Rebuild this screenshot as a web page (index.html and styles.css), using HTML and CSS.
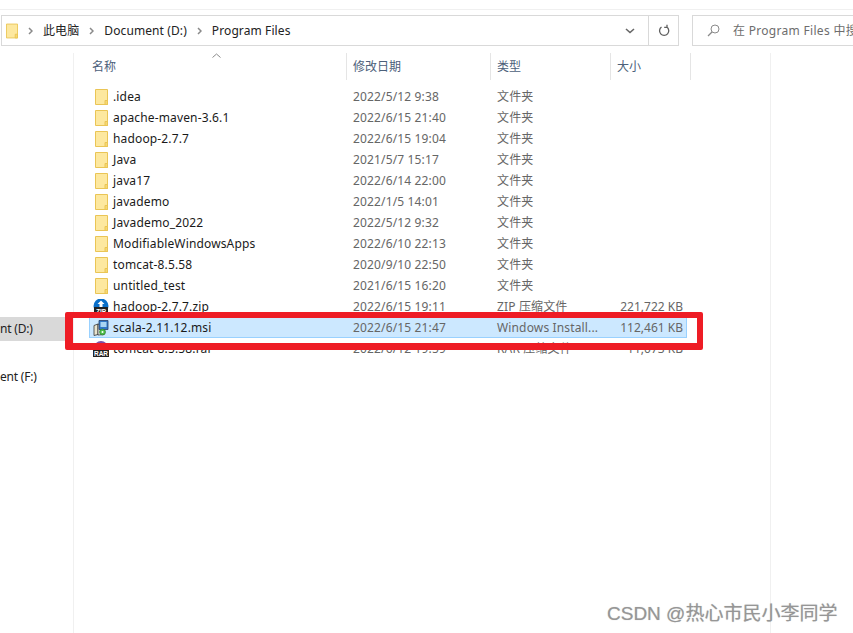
FILE: index.html
```html
<!DOCTYPE html>
<html lang="zh">
<head>
<meta charset="utf-8">
<title>Program Files</title>
<link rel="stylesheet" href="styles.css">
</head>
<body>
<svg class="sprites" width="0" height="0" aria-hidden="true">
  <defs>
    <symbol id="folder" viewBox="0 0 13 16">
      <path d="M.5.5h12v15H.5z" fill="#fde89f" stroke="#eac555"/>
      <path d="M10 15.500v-4h2.500v4z" fill="#f6d873" stroke="#eac555"/>
    </symbol>
    <symbol id="chev" viewBox="0 0 5 8">
      <path d="M1 1l3 3-3 3" fill="none" stroke="#8a8a8a" stroke-width="1.500"/>
    </symbol>
  </defs>
</svg>
<div class="topline"></div>
<header class="toolbar">
  <nav class="address">
    <svg class="crumb-folder"><use href="#folder"/></svg>
    <span class="sep"><svg class="chev"><use href="#chev"/></svg></span><span class="crumb">此电脑</span>
    <span class="sep"><svg class="chev"><use href="#chev"/></svg></span><span class="crumb">Document (D:)</span>
    <span class="sep"><svg class="chev"><use href="#chev"/></svg></span><span class="crumb">Program Files</span>
    <svg class="dropdown" width="10" height="6" viewBox="0 0 10 6"><path d="M1 1l4 3.500L9 1" fill="none" stroke="#666" stroke-width="1.600"/></svg>
  </nav>
  <div class="refresh">
    <svg width="12" height="13" viewBox="0 0 12 13"><path d="M3.200 3A4.600 4.600 0 1 0 8.500 3M3 .8V3.400h2.800" transform="matrix(-1 0 0 1 12 0)" fill="none" stroke="#5f5f5f" stroke-width="1.300"/></svg>
  </div>
  <div class="search">
    <svg class="search-ico" width="13" height="13" viewBox="0 0 13 13"><circle cx="8" cy="5" r="4" fill="none" stroke="#8a8a8a"/><path d="M5 8L1 12" stroke="#8a8a8a" stroke-width="1.200"/></svg>
    <span class="search-text">在 Program Files 中搜索</span>
  </div>
</header>
<main class="main">
  <aside class="sidebar">
    <div class="side-item active">nt (D:)</div>
    <div class="side-item side-last">ent (F:)</div>
  </aside>
  <section class="content">
    <div class="columns">
      <div class="col col-name">名称</div>
      <div class="col">修改日期</div>
      <div class="col">类型</div>
      <div class="col">大小</div>
    </div>
    <svg class="sort" width="9" height="5" viewBox="0 0 9 5"><path d="M.5 4.500l4-3.500 4 3.500" fill="none" stroke="#8a8a8a"/></svg>
    <div class="rows">
      <div class="row"><div class="name"><svg class="ico"><use href="#folder"/></svg>.idea</div><div class="meta">2022/5/12 9:38</div><div class="meta">文件夹</div><div></div></div>
      <div class="row"><div class="name"><svg class="ico"><use href="#folder"/></svg>apache-maven-3.6.1</div><div class="meta">2022/6/15 21:40</div><div class="meta">文件夹</div><div></div></div>
      <div class="row"><div class="name"><svg class="ico"><use href="#folder"/></svg>hadoop-2.7.7</div><div class="meta">2022/6/15 19:04</div><div class="meta">文件夹</div><div></div></div>
      <div class="row"><div class="name"><svg class="ico"><use href="#folder"/></svg>Java</div><div class="meta">2021/5/7 15:17</div><div class="meta">文件夹</div><div></div></div>
      <div class="row"><div class="name"><svg class="ico"><use href="#folder"/></svg>java17</div><div class="meta">2022/6/14 22:00</div><div class="meta">文件夹</div><div></div></div>
      <div class="row"><div class="name"><svg class="ico"><use href="#folder"/></svg>javademo</div><div class="meta">2022/1/5 14:01</div><div class="meta">文件夹</div><div></div></div>
      <div class="row"><div class="name"><svg class="ico"><use href="#folder"/></svg>Javademo_2022</div><div class="meta">2022/5/12 9:32</div><div class="meta">文件夹</div><div></div></div>
      <div class="row"><div class="name"><svg class="ico"><use href="#folder"/></svg>ModifiableWindowsApps</div><div class="meta">2022/6/10 22:13</div><div class="meta">文件夹</div><div></div></div>
      <div class="row"><div class="name"><svg class="ico"><use href="#folder"/></svg>tomcat-8.5.58</div><div class="meta">2020/9/10 22:50</div><div class="meta">文件夹</div><div></div></div>
      <div class="row"><div class="name"><svg class="ico"><use href="#folder"/></svg>untitled_test</div><div class="meta">2021/6/15 16:20</div><div class="meta">文件夹</div><div></div></div>
      <div class="row">
        <div class="name">
          <svg class="ico-file" viewBox="0 0 16 16"><circle cx="8" cy="7" r="7.500" fill="#0a6fc9"/><path d="M8 1.500l3.500 3.500H9.500v3h-3V5H4.500z" fill="#fff"/><path d="M1 8h14v8H1z" fill="#222"/><text class="badge" x="8" y="14.500">ZIP</text></svg>hadoop-2.7.7.zip
        </div>
        <div class="meta">2022/6/15 19:11</div><div class="meta">ZIP 压缩文件</div><div class="meta size">221,722 KB</div>
      </div>
      <div class="row selected">
        <div class="name">
          <svg class="ico-file" viewBox="0 0 16 16"><path d="M1 5.500l4-1.500v10.500l-4 1z" fill="#e9e4cf" stroke="#333" stroke-width=".8"/><path d="M5 4l6 1.500v9l-6 .500z" fill="#fff" stroke="#333" stroke-width=".8"/><path d="M6 .500h9v9H6z" fill="#2f78c8" stroke="#2a3f66" stroke-width=".8"/><path d="M7.500 2h6v5h-6z" fill="#a8d4f2"/><circle cx="9.500" cy="12" r="3" fill="#4cc04a" stroke="#2c6b2a" stroke-width=".6"/><circle cx="9.500" cy="12" r="1" fill="#fff"/></svg>scala-2.11.12.msi
        </div>
        <div class="meta">2022/6/15 21:47</div><div class="meta">Windows Install...</div><div class="meta size">112,461 KB</div>
      </div>
      <div class="row">
        <div class="name">
          <svg class="ico-file" viewBox="0 0 16 16"><circle cx="8" cy="7" r="7" fill="#7a4fa8"/><circle cx="8" cy="5" r="2.500" fill="#c24a78"/><path d="M0 9h16v7H0z" fill="#222"/><text class="badge" x="8" y="15.200">RAR</text></svg>tomcat-8.5.58.rar
        </div>
        <div class="meta">2022/6/12 19:59</div><div class="meta">RAR 压缩文件</div><div class="meta size">11,073 KB</div>
      </div>
    </div>
  </section>
</main>
<div class="highlight"></div>
<div class="watermark">CSDN @热心市民小李同学</div>
</body>
</html>
```
FILE: styles.css
```css
* { box-sizing: border-box; }
html, body { margin: 0; height: 100%; }
body {
  position: relative;
  width: 853px;
  height: 633px;
  overflow: hidden;
  background: #fff;
  color: #1a1a1a;
  font: 12px/21px "Noto Sans", "Noto Sans CJK SC", sans-serif;
}
.sprites { position: absolute; }
.topline { height: 1px; margin-top: 9px; background: #f0f0f0; }

.toolbar { display: flex; height: 31px; margin-top: 5px; padding-left: 1px; }
.address {
  display: flex;
  flex: none;
  align-items: center;
  width: 647px;
  padding-left: 4px;
  border: 1px solid #d9d9d9;
  border-right: 0;
  letter-spacing: .1px;
}
.crumb-folder { width: 12px; height: 16px; }
.sep { display: flex; justify-content: center; width: 25px; }
.chev { width: 5px; height: 8px; }
.crumb { color: #222; }
.dropdown { margin-left: auto; margin-right: 13px; }
.refresh {
  display: flex;
  flex: none;
  align-items: center;
  justify-content: center;
  width: 31px;
  border: 1px solid #d9d9d9;
}
.search {
  display: flex;
  flex: none;
  align-items: center;
  gap: 13px;
  width: 161px;
  margin-left: 13px;
  padding-left: 14px;
  border: 1px solid #d9d9d9;
  border-right: 0;
  color: #6d6d6d;
  white-space: nowrap;
  overflow: hidden;
}
.search-ico { flex: none; }
.search-text { letter-spacing: .3px; }

.main { display: flex; height: 580px; margin-top: 7px; }
.sidebar {
  flex: none;
  width: 74px;
  padding-top: 264px;
  border-right: 1px solid #f0f0f0;
}
.side-item { height: 24px; line-height: 24px; color: #222; letter-spacing: -.2px; }
.side-item.active { background: #d9d9d9; }
.side-last { margin-top: 24px; }

.content { position: relative; flex: none; width: 697px; border-right: 1px solid #f0f0f0; }
.columns { display: grid; grid-template-columns: 273px 144px 120px 80px; height: 27px; }
.col {
  padding-left: 6px;
  border-right: 1px solid #e5e5e5;
  color: #4c607a;
  line-height: 27px;
}
.col-name { padding-left: 18px; }
.sort { position: absolute; left: 138px; top: 0; }

.rows { margin: 6px 0 0 15px; width: 598px; letter-spacing: .15px; }
.row {
  display: grid;
  grid-template-columns: 263px 144px 103px 83px;
  height: 21px;
  border: 1px solid transparent;
  line-height: 19px;
  white-space: nowrap;
}
.row.selected { background: #cce8ff; border-color: #99d1ff; }
.name { display: flex; align-items: center; padding-left: 5px; }
.ico { width: 13px; height: 16px; margin-right: 5px; flex: none; }
.ico-file { width: 16px; height: 16px; margin: 0 4px 0 -2px; flex: none; }
.badge {
  fill: #fff;
  font: 700 6.500px "Liberation Sans", sans-serif;
  text-anchor: middle;
  letter-spacing: 0;
}
.meta { color: #666; }
.size { text-align: right; letter-spacing: 0; }

.highlight {
  position: absolute;
  left: 65px;
  top: 312px;
  width: 638px;
  height: 38px;
  border-style: solid;
  border-color: #ee1c25;
  border-width: 6px 6px 7px 8px;
  border-radius: 2px;
}
.watermark {
  position: absolute;
  left: 607px;
  top: 601px;
  color: #969696;
  font: 19px/26px "Liberation Sans", "Noto Sans CJK SC", sans-serif;
  text-shadow: 0 0 1px rgba(0, 0, 0, .25);
  white-space: nowrap;
}
```
